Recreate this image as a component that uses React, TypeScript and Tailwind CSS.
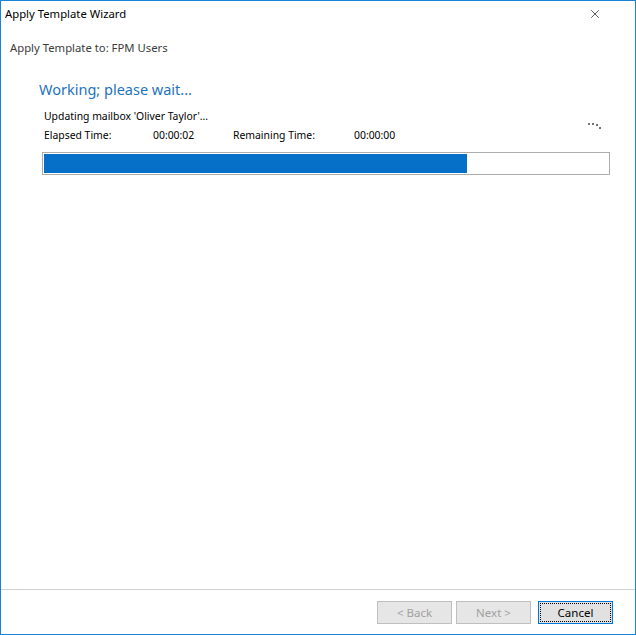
import { X } from "lucide-react";

const font = { fontFamily: '"Noto Sans", "Liberation Sans", sans-serif' };

function WizardButton({ label, disabled, focused }: { label: string; disabled?: boolean; focused?: boolean }) {
  if (focused) {
    return (
      <div className="w-[75px] h-[23px] border border-[#0078d7] bg-[#e1e1e1] p-[1px]">
        <div className="h-full border border-dotted border-black flex items-center justify-center text-[11.5px] text-black">
          {label}
        </div>
      </div>
    );
  }
  return (
    <div
      className={
        "w-[75px] h-[23px] border flex items-center justify-center text-[11.5px] " +
        (disabled ? "border-[#bfbfbf] bg-[#e6e6e6] text-[#a0a0a0]" : "border-[#adadad] bg-[#e1e1e1] text-black")
      }
    >
      {label}
    </div>
  );
}

export default function App() {
  const progress = 75;
  return (
    <div style={font} className="w-[636px] h-[635px] border border-[#1883d7] bg-white flex flex-col text-black">
      <div className="h-[26px] flex items-center justify-between pl-[4px] pr-[33px]">
        <span className="text-[11.3px] leading-none">Apply Template Wizard</span>
        <X className="w-[14px] h-[14px]" strokeWidth={1.1} />
      </div>

      <div className="flex-1 flex flex-col">
        <div className="pl-[9px] pt-[15px] text-[11.3px] text-[#3c3c3c] leading-none">Apply Template to: FPM Users</div>

        <div className="pl-[38px] pt-[29px] text-[14.5px] text-[#1e73be] leading-none">Working; please wait...</div>

        <div className="pl-[43px] pr-[33px] pt-[14px] text-[10.4px] leading-none">
          <div>Updating mailbox 'Oliver Taylor'...</div>
          <div className="flex items-start mt-[9px]">
            <span className="w-[109px]">Elapsed Time:</span>
            <span className="w-[80px]">00:00:02</span>
            <span className="w-[121px]">Remaining Time:</span>
            <span>00:00:00</span>
            <div className="ml-auto -mt-[7px] relative w-[14px] h-[8px]">
              <span className="absolute left-0 top-0 w-[2px] h-[2px] rounded-full bg-[#444]" />
              <span className="absolute left-[4px] top-0 w-[2px] h-[2px] rounded-full bg-[#444]" />
              <span className="absolute left-[8px] top-[1px] w-[2px] h-[2px] rounded-full bg-[#444]" />
              <span className="absolute left-[11px] top-[4px] w-[2px] h-[2px] rounded-full bg-[#444]" />
            </div>
          </div>
        </div>

        <div className="ml-[41px] mr-[25px] mt-[11px] h-[23px] border border-[#adadad] p-[1px]">
          <div className="h-full bg-[#0670c9]" style={{ width: `${progress}%` }} />
        </div>
      </div>

      <div className="border-t border-[#d0d0d0] h-[45px] flex items-start justify-end pt-[11px] pr-[22px]">
        <WizardButton label="< Back" disabled />
        <div className="ml-[4px]">
          <WizardButton label="Next >" disabled />
        </div>
        <div className="ml-[7px]">
          <WizardButton label="Cancel" focused />
        </div>
      </div>
    </div>
  );
}
